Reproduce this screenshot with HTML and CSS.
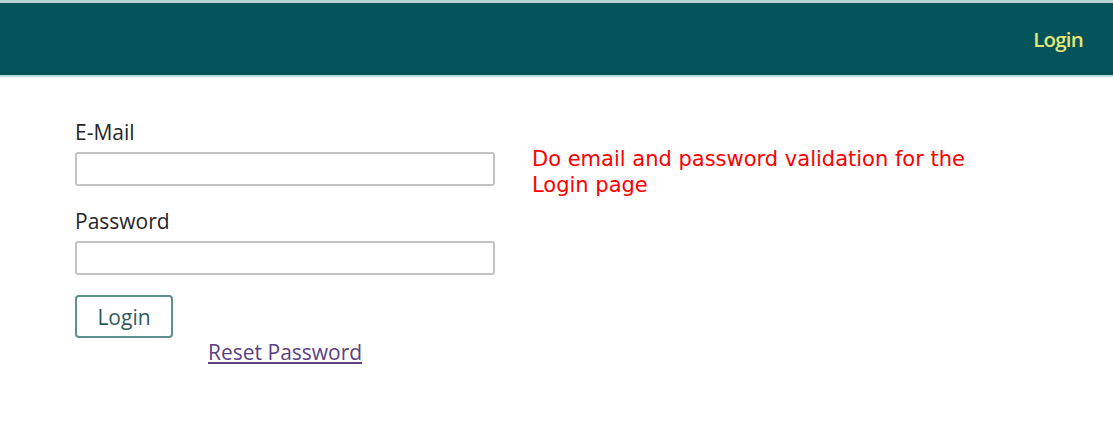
FILE: index.html
```html
<!DOCTYPE html>
<html>
<head>
<meta charset="utf-8">
<link rel="stylesheet" href="styles.css">
</head>
<body>
<header class="topbar">
  <a class="nav-login" href="#">Login</a>
</header>
<main class="content">
  <form class="login-form">
    <label class="field-label" for="email">E-Mail</label>
    <input class="field-input" id="email" type="text">
    <label class="field-label" for="password">Password</label>
    <input class="field-input field-input-last" id="password" type="password">
    <button class="login-btn" type="button">Login</button>
    <a class="reset-link" href="#">Reset Password</a>
  </form>
  <p class="note">Do email and password validation for the Login page</p>
</main>
</body>
</html>
```
FILE: styles.css
```css
html, body {
  margin: 0;
  padding: 0;
  background: #ffffff;
}
body {
  font-family: "Open Sans", "Liberation Sans", sans-serif;
}
.topbar {
  height: 72px;
  background: #03535a;
  border-top: 3px solid #b9d2d3;
  border-bottom: 2px solid #b4dcdc;
  display: flex;
  align-items: center;
  justify-content: flex-end;
  padding-right: 30px;
}
.nav-login {
  color: #e6e77a;
  font-size: 20.5px;
  font-weight: 600;
  text-decoration: none;
  letter-spacing: -0.8px;
}
.content {
  display: flex;
  align-items: flex-start;
  padding: 41px 0 0 75px;
  gap: 37px;
}
.login-form {
  display: flex;
  flex-direction: column;
  width: 420px;
}
.field-label {
  font-size: 21px;
  font-weight: 500;
  color: #262626;
  line-height: 28px;
  margin-bottom: 6px;
}
.field-input {
  box-sizing: border-box;
  width: 420px;
  height: 34px;
  border: 2px solid #c2c2c2;
  border-radius: 3px;
  margin: 0 0 21px 0;
  padding: 0 8px;
  font-size: 16px;
  outline: none;
}
.field-input-last {
  margin-bottom: 20px;
}
.login-btn {
  box-sizing: border-box;
  align-self: flex-start;
  width: 98px;
  height: 43px;
  background: #ffffff;
  border: 2px solid #5e8f8f;
  border-radius: 4px;
  color: #2f5a5b;
  font-family: "Open Sans", "Liberation Sans", sans-serif;
  font-size: 21px;
  font-weight: 500;
  padding: 0;
}
.reset-link {
  align-self: flex-start;
  margin-left: 133px;
  margin-top: 1px;
  color: #5b4183;
  font-size: 21px;
  font-weight: 500;
  line-height: 26px;
}
.note {
  margin: 28px 0 0 0;
  width: 460px;
  color: #ff0000;
  font-family: "DejaVu Sans", sans-serif;
  font-size: 21px;
  line-height: 26px;
}
```
